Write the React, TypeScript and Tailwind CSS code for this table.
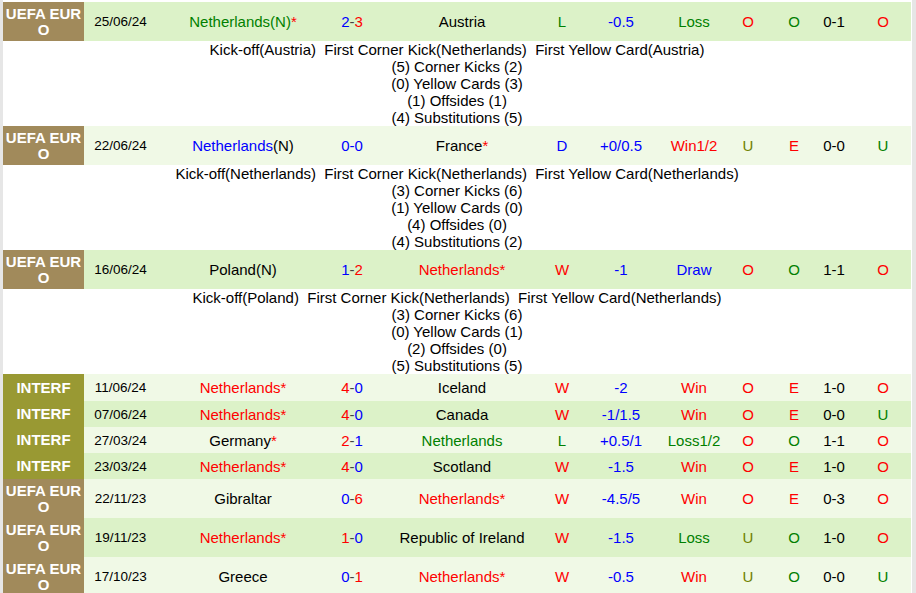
import type { ReactNode } from "react";

const RED = "text-[#ff0000]";
const GREEN = "text-[#008000]";
const BLUE = "text-[#0000ff]";
const OLIVE = "text-[#6f8000]";

type Match = {
  comp: "UEFA EURO" | "INTERF";
  date: string;
  home: ReactNode;
  score: [number, number];
  away: ReactNode;
  res: "W" | "D" | "L";
  hcap: string;
  hres: string;
  ou: "O" | "U";
  eo: "O" | "E";
  half: string;
  last: "O" | "U";
  h?: string;
  detail?: { lead: string; lines: string[] };
};

const star = <span className={RED}>*</span>;

const matches: Match[] = [
  {
    comp: "UEFA EURO", date: "25/06/24",
    home: <><span className={GREEN}>Netherlands(N)</span>{star}</>,
    score: [2, 3], away: "Austria", res: "L", hcap: "-0.5", hres: "Loss",
    ou: "O", eo: "O", half: "0-1", last: "O",
    detail: {
      lead: "Kick-off(Austria)  First Corner Kick(Netherlands)  First Yellow Card(Austria)",
      lines: ["(5) Corner Kicks (2)", "(0) Yellow Cards (3)", "(1) Offsides (1)", "(4) Substitutions (5)"],
    },
  },
  {
    comp: "UEFA EURO", date: "22/06/24",
    home: <><span className={BLUE}>Netherlands</span>(N)</>,
    score: [0, 0], away: <>France{star}</>, res: "D", hcap: "+0/0.5", hres: "Win1/2",
    ou: "U", eo: "E", half: "0-0", last: "U",
    detail: {
      lead: "Kick-off(Netherlands)  First Corner Kick(Netherlands)  First Yellow Card(Netherlands)",
      lines: ["(3) Corner Kicks (6)", "(1) Yellow Cards (0)", "(4) Offsides (0)", "(4) Substitutions (2)"],
    },
  },
  {
    comp: "UEFA EURO", date: "16/06/24",
    home: "Poland(N)",
    score: [1, 2], away: <span className={RED}>Netherlands*</span>, res: "W", hcap: "-1", hres: "Draw",
    ou: "O", eo: "O", half: "1-1", last: "O",
    detail: {
      lead: "Kick-off(Poland)  First Corner Kick(Netherlands)  First Yellow Card(Netherlands)",
      lines: ["(3) Corner Kicks (6)", "(0) Yellow Cards (1)", "(2) Offsides (0)", "(5) Substitutions (5)"],
    },
  },
  {
    comp: "INTERF", date: "11/06/24", h: "h-[27px]",
    home: <span className={RED}>Netherlands*</span>,
    score: [4, 0], away: "Iceland", res: "W", hcap: "-2", hres: "Win",
    ou: "O", eo: "E", half: "1-0", last: "O",
  },
  {
    comp: "INTERF", date: "07/06/24",
    home: <span className={RED}>Netherlands*</span>,
    score: [4, 0], away: "Canada", res: "W", hcap: "-1/1.5", hres: "Win",
    ou: "O", eo: "E", half: "0-0", last: "U",
  },
  {
    comp: "INTERF", date: "27/03/24",
    home: <>Germany{star}</>,
    score: [2, 1], away: <span className={GREEN}>Netherlands</span>, res: "L", hcap: "+0.5/1", hres: "Loss1/2",
    ou: "O", eo: "O", half: "1-1", last: "O",
  },
  {
    comp: "INTERF", date: "23/03/24",
    home: <span className={RED}>Netherlands*</span>,
    score: [4, 0], away: "Scotland", res: "W", hcap: "-1.5", hres: "Win",
    ou: "O", eo: "E", half: "1-0", last: "O",
  },
  {
    comp: "UEFA EURO", date: "22/11/23",
    home: "Gibraltar",
    score: [0, 6], away: <span className={RED}>Netherlands*</span>, res: "W", hcap: "-4.5/5", hres: "Win",
    ou: "O", eo: "E", half: "0-3", last: "O",
  },
  {
    comp: "UEFA EURO", date: "19/11/23",
    home: <span className={RED}>Netherlands*</span>,
    score: [1, 0], away: "Republic of Ireland", res: "W", hcap: "-1.5", hres: "Loss",
    ou: "U", eo: "O", half: "1-0", last: "O",
  },
  {
    comp: "UEFA EURO", date: "17/10/23",
    home: "Greece",
    score: [0, 1], away: <span className={RED}>Netherlands*</span>, res: "W", hcap: "-0.5", hres: "Win",
    ou: "U", eo: "O", half: "0-0", last: "U",
  },
];

const resColor = { W: RED, D: BLUE, L: GREEN };

function hresColor(s: string) {
  if (s.startsWith("Win")) return RED;
  if (s.startsWith("Loss")) return GREEN;
  return BLUE;
}

function Score({ a, b }: { a: number; b: number }) {
  if (a === b) return <span className={BLUE}>{a}-{b}</span>;
  return (
    <>
      <span className={a > b ? RED : BLUE}>{a}</span>
      <span className="text-[#444]">-</span>
      <span className={b > a ? RED : BLUE}>{b}</span>
    </>
  );
}

function Row({ m, dark }: { m: Match; dark: boolean }) {
  const uefa = m.comp === "UEFA EURO";
  const height = m.h ?? (uefa ? "h-[39px]" : "h-[26px]");
  return (
    <div
      className={`grid grid-cols-[81px_73px_172px_46px_174px_26px_92px_54px_54px_38px_42px_56px] items-center text-center [&>*:not(:first-child)]:pt-[2px] ${height} ${
        dark ? "bg-[#dcf2c8]" : "bg-[#f0f9e6]"
      }`}
    >
      <div
        className={`flex h-full items-center justify-center break-all text-[15px] font-bold leading-4 text-white ${
          uefa ? "bg-[#a18a5b]" : "bg-[#999933]"
        }`}
      >
        {m.comp}
      </div>
      <div className="text-[13.5px]">{m.date}</div>
      <div>{m.home}</div>
      <div><Score a={m.score[0]} b={m.score[1]} /></div>
      <div>{m.away}</div>
      <div className={resColor[m.res]}>{m.res}</div>
      <div className={BLUE}>{m.hcap}</div>
      <div className={hresColor(m.hres)}>{m.hres}</div>
      <div className={m.ou === "O" ? RED : OLIVE}>{m.ou}</div>
      <div className={m.eo === "E" ? RED : GREEN}>{m.eo}</div>
      <div>{m.half}</div>
      <div className={m.last === "O" ? RED : GREEN}>{m.last}</div>
    </div>
  );
}

function Detail({ lead, lines }: { lead: string; lines: string[] }) {
  return (
    <div className="bg-white text-center leading-[17px]">
      <div className="whitespace-pre">{lead}</div>
      {lines.map((l) => (
        <div key={l}>{l}</div>
      ))}
    </div>
  );
}

export default function App() {
  return (
    <div className="flex h-[593px] w-[916px] overflow-hidden bg-white font-['Liberation_Sans',Arial,sans-serif] text-[15px] text-black">
      <div className="w-[3px] shrink-0 bg-[#e6e6e6]" />
      <div className="w-[908px] shrink-0">
        <div className="h-[2px] bg-white" />
        {matches.map((m, i) => (
          <div key={m.date}>
            <Row m={m} dark={i % 2 === 0} />
            {m.detail && <Detail lead={m.detail.lead} lines={m.detail.lines} />}
          </div>
        ))}
      </div>
      <div className="w-px shrink-0 bg-white" />
      <div className="w-[4px] shrink-0 bg-[#e6e6e6]" />
    </div>
  );
}
